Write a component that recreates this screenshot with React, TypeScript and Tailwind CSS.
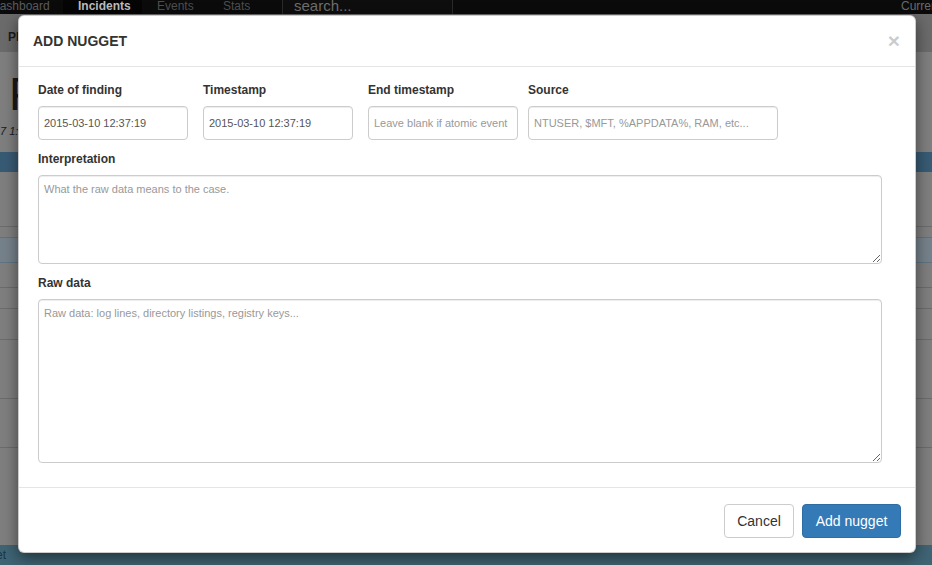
import React from "react";

const labelCls = "block text-[12px] leading-[20px] font-bold text-[#333] mb-[6px]";
const inputCls =
    "block h-[34px] rounded-[4px] border border-[#ccc] bg-white px-[5px] text-[11px] text-[#555] shadow-[inset_0_1px_1px_rgba(0,0,0,0.075)] outline-none placeholder:text-[#999]";
const textareaCls =
    "block w-[844px] rounded-[4px] border border-[#ccc] bg-white px-[5px] py-[5px] text-[11px] leading-[16px] text-[#555] shadow-[inset_0_1px_1px_rgba(0,0,0,0.075)] outline-none placeholder:text-[#999]";

function Field({ label, width, value, placeholder, className }: { label: string; width: string; value?: string; placeholder?: string; className?: string }) {
    return (
        <div className={className}>
            <label className={labelCls}>{label}</label>
            <input type="text" defaultValue={value} placeholder={placeholder} className={`${inputCls} ${width}`} />
        </div>
    );
}

function BackgroundPage() {
    return (
        <div className="flex h-full flex-col">
            {/* Navbar (page scrolled, only its bottom shows) */}
            <div className="flex h-[14px] items-start overflow-hidden bg-[#0b0b0b] text-[12px] leading-[12px]">
                <div className="w-[63px] overflow-hidden text-[#5c5c5c]">
                    <span className="-ml-[9px] block whitespace-nowrap">Dashboard</span>
                </div>
                <div className="h-full w-[79px] bg-[#050505] pl-[15px] font-bold text-[#bdbdbd]">Incidents</div>
                <div className="w-[66px] pl-[15px] text-[#4f4f4f]">Events</div>
                <div className="w-[74px] pl-[15px] text-[#4f4f4f]">Stats</div>
                <div className="h-full w-[171px] border-x border-[#2a2a2a] bg-[#0e0e0e] pl-[11px] text-[15px] leading-[12px] text-[#6f6f6f]">search...</div>
                <div className="flex-1" />
                <div className="w-[31px] overflow-hidden whitespace-nowrap text-[#6a6a6a]">Current</div>
            </div>

            {/* Breadcrumb band */}
            <div className="h-[38px] bg-[#6b6b6b] pl-[8px] pt-[16px] text-[12px] font-bold leading-[14px] text-[#1c1c1c]">Pl</div>

            {/* Page header */}
            <div className="h-[100px] pl-[9px]">
                <div className="pt-[16px] text-[46px] leading-[52px] text-[#1a1a1a]">P</div>
                <div className="-ml-[9px] pt-[4px] text-[11px] italic leading-[14px] text-[#1a1a1a]">7 1:25</div>
            </div>

            {/* Table */}
            <div className="h-[20px] bg-[#385b74]" />
            <div className="h-[55px] border-b border-[#6c6c6c]" />
            <div className="h-[11px] border-b border-[#5f7382]" />
            <div className="h-[25px] border-b border-[#5f7382] bg-[#76828b]" />
            <div className="h-[25px] border-b border-[#6c6c6c]" />
            <div className="h-[21px] border-b border-[#6c6c6c]" />
            <div className="h-[31px] border-b border-[#6c6c6c]" />
            <div className="h-[59px] border-b border-[#6c6c6c]" />
            <div className="h-[49px] border-b border-[#6c6c6c]" />
            <div className="flex-1" />

            {/* Footer bar */}
            <div className="h-[20px] bg-[#3f6474] text-[12px] leading-[20px] text-[#1b3647]">
                <span className="-ml-[12px]">Set</span>
            </div>
        </div>
    );
}

export default function App() {
    return (
        <div className="relative h-[565px] w-[932px] overflow-hidden bg-[#7f7f7f] font-['Liberation_Sans',Arial,sans-serif]">
            <BackgroundPage />

            {/* Modal */}
            <div className="absolute left-[18px] top-[15px] w-[898px] rounded-[6px] border border-black/20 bg-white shadow-[0_5px_15px_rgba(0,0,0,0.5)]">
                {/* Header */}
                <div className="flex h-[51px] items-center justify-between border-b border-[#e5e5e5] pl-[14px] pr-[15px]">
                    <h4 className="text-[14px] font-bold leading-[20px] text-[#333]">ADD NUGGET</h4>
                    <button className="text-[21px] font-bold leading-[20px] text-black opacity-20" aria-label="Close">
                        ×
                    </button>
                </div>

                {/* Body */}
                <div className="pb-[24px] pl-[19px] pt-[13px]">
                    <div className="flex">
                        <Field label="Date of finding" width="w-[150px]" value="2015-03-10 12:37:19" />
                        <Field label="Timestamp" width="w-[150px]" value="2015-03-10 12:37:19" className="ml-[15px]" />
                        <Field label="End timestamp" width="w-[150px]" placeholder="Leave blank if atomic event" className="ml-[15px]" />
                        <Field label="Source" width="w-[250px]" placeholder="NTUSER, $MFT, %APPDATA%, RAM, etc..." className="ml-[10px]" />
                    </div>

                    <label className={`${labelCls} mt-[9px]`}>Interpretation</label>
                    <textarea className={`${textareaCls} h-[89px]`} placeholder="What the raw data means to the case." />

                    <label className={`${labelCls} mt-[9px]`}>Raw data</label>
                    <textarea className={`${textareaCls} h-[164px]`} placeholder="Raw data: log lines, directory listings, registry keys..." />
                </div>

                {/* Footer */}
                <div className="flex justify-end gap-[8px] border-t border-[#e5e5e5] pb-[14px] pr-[14px] pt-[16px]">
                    <button className="h-[34px] w-[70px] rounded-[4px] border border-[#ccc] bg-white text-[14px] text-[#333]">Cancel</button>
                    <button className="h-[34px] w-[99px] rounded-[4px] border border-[#2e6da4] bg-[#337ab7] text-[14px] text-white">Add nugget</button>
                </div>
            </div>
        </div>
    );
}
